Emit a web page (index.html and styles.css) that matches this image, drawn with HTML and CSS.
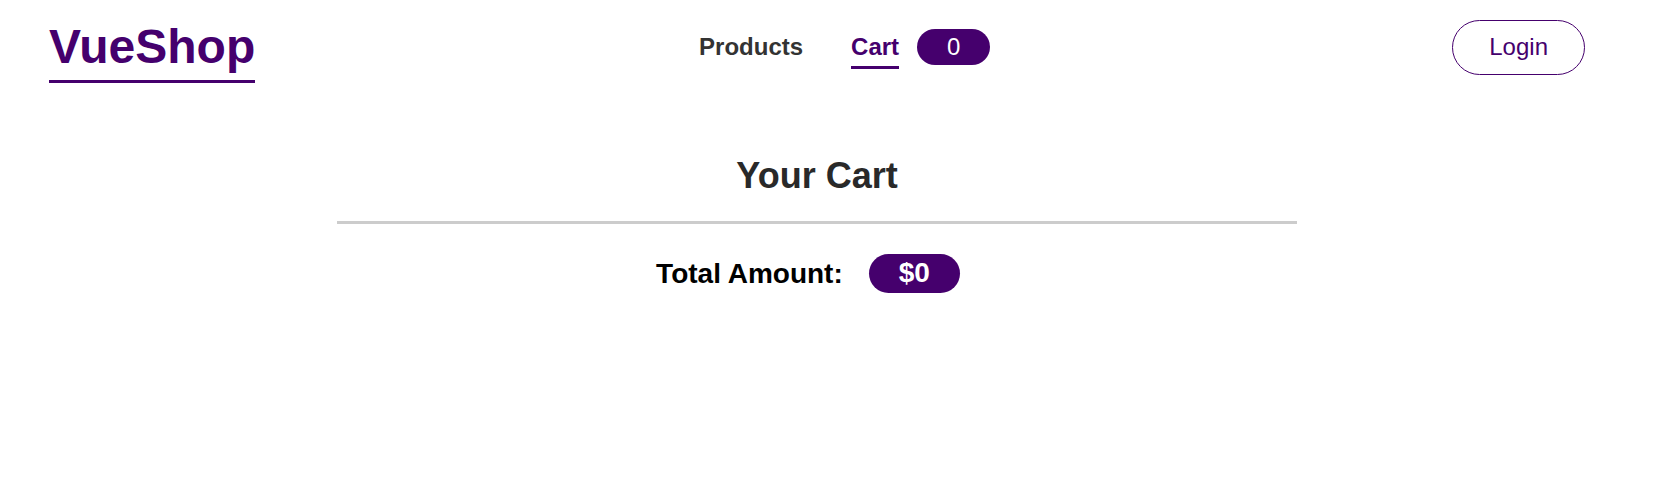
FILE: index.html
```html
<!DOCTYPE html>
<html lang="en">
<head>
<meta charset="utf-8">
<title>VueShop</title>
<link rel="stylesheet" href="styles.css">
</head>
<body>
<header class="header">
  <h1 class="logo"><a class="logo-link" href="#">VueShop</a></h1>
  <nav class="nav">
    <a class="nav-link" href="#products">Products</a>
    <div class="nav-item">
      <a class="nav-link active" href="#cart">Cart</a>
      <span class="badge">0</span>
    </div>
  </nav>
  <button class="login" type="button">Login</button>
</header>
<main class="cart">
  <h2 class="cart-title">Your Cart</h2>
  <h3 class="total">Total Amount: <span class="badge badge-total">$0</span></h3>
</main>
</body>
</html>
```

FILE: styles.css
```css
* {
  box-sizing: border-box;
}

body {
  margin: 0;
  padding-right: 41px;
  background: #fff;
  font-family: Arial, "Liberation Sans", sans-serif;
  font-size: 24px;
  line-height: 28px;
}

.header {
  display: flex;
  justify-content: space-between;
  align-items: center;
  height: 94px;
  padding: 0 49px;
}

.logo {
  margin: 0;
  font-size: 48px;
  line-height: 56px;
}

.logo-link {
  display: block;
  padding: 7px 0 5px;
  border-bottom: 3px solid #45006d;
  color: #45006d;
  text-decoration: none;
}

.nav {
  display: flex;
  align-items: center;
  gap: 48px;
  margin-right: 18px;
}

.nav-item {
  display: flex;
  align-items: center;
  gap: 18px;
}

.nav-link {
  padding: 8px 0 5px;
  border-bottom: 3px solid transparent;
  color: #333;
  font-weight: bold;
  text-decoration: none;
}

.nav-link.active {
  border-color: #45006d;
  color: #45006d;
}

.badge {
  padding: 4px 30px;
  border-radius: 30px;
  background: #45006d;
  color: #fff;
}

.login {
  padding: 12px 36px 13px;
  border: 1px solid #45006d;
  border-radius: 30px;
  background: transparent;
  color: #45006d;
  font: inherit;
  cursor: pointer;
}

.cart {
  max-width: 960px;
  margin: 61px auto 0;
}

.cart-title {
  margin: 0;
  padding-bottom: 24px;
  border-bottom: 3px solid #ccc;
  color: #292929;
  font-size: 36px;
  line-height: 42px;
  text-align: center;
}

.total {
  display: flex;
  justify-content: center;
  align-items: center;
  gap: 26px;
  margin: 30px 18px 0 0;
  color: #000;
  font-size: 28px;
}

.badge-total {
  padding: 5px 30px 6px;
}
```
